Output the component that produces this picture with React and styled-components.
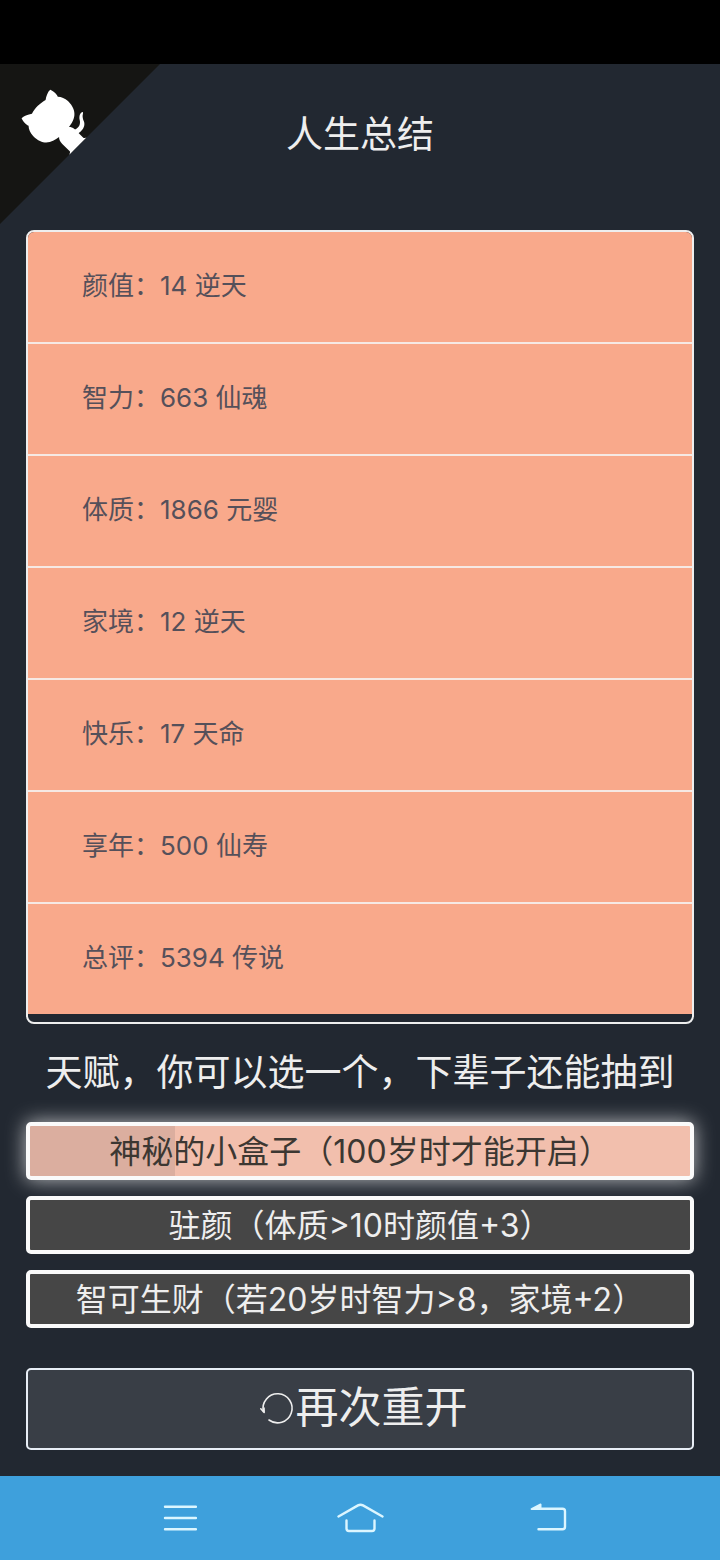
import React, { useState } from "react";
import styled, { createGlobalStyle, css } from "styled-components";

const GlobalStyle = createGlobalStyle`
  *, *::before, *::after { box-sizing: border-box; }
  body {
    margin: 0;
    background: #222831;
    color: #eeeeee;
    font-family: Inter, "Noto Sans CJK SC", sans-serif;
  }
  button { font: inherit; color: inherit; cursor: pointer; }
`;

const Screen = styled.div`
  display: flex;
  flex-direction: column;
  min-height: 100vh;
`;

const StatusBar = styled.div`
  height: 64px;
  background: #000000;
`;

const Header = styled.header`
  position: relative;
  display: flex;
  align-items: center;
  justify-content: center;
  height: 166px;
  padding-bottom: 24px;
`;

const CornerLink = styled.a`
  position: absolute;
  top: 0;
  left: 0;
  line-height: 0;
  color: #ffffff;
`;

const Heading = styled.h1`
  margin: 0;
  font-size: 37px;
  line-height: 48px;
  font-weight: 400;
`;

const Main = styled.main`
  flex: 1;
  display: flex;
  flex-direction: column;
  padding: 0 26px 26px;
`;

const Summary = styled.ul`
  margin: 0;
  padding: 0 0 8px;
  list-style: none;
  border: 2px solid #eeeeee;
  border-radius: 8px;
  overflow: hidden;
`;

const SummaryRow = styled.li`
  display: flex;
  align-items: center;
  height: 112px;
  padding: 0 54px 2px;
  border-bottom: 2px solid #f6e9e4;
  background: #f9a98b;
  color: #55505a;
  font-size: 26px;
  line-height: 36px;
  font-weight: 400;

  &:last-child {
    height: 110px;
    border-bottom: 0;
  }
`;

const Caption = styled.h2`
  display: flex;
  align-items: center;
  justify-content: center;
  height: 98px;
  margin: 0;
  font-size: 37px;
  line-height: 48px;
  font-weight: 400;
  white-space: nowrap;
`;

const TalentList = styled.div`
  display: flex;
  flex-direction: column;
  gap: 16px;
`;

const TalentButton = styled.button`
  height: 58px;
  padding: 2px 0 0;
  border: 4px solid #fafafa;
  border-radius: 5px;
  background: #464646;
  color: #eeeeee;
  font-size: 32px;
  line-height: 40px;
  font-weight: 400;
  white-space: nowrap;

  ${({ $selected }) =>
    $selected &&
    css`
      background: linear-gradient(90deg, #dbae9f 22%, #f2bfad 22%);
      color: #3c3732;
      box-shadow: 0 0 20px rgba(255, 255, 255, 0.7);
    `}
`;

const RestartButton = styled.button`
  display: flex;
  align-items: center;
  justify-content: center;
  height: 82px;
  margin-top: 40px;
  padding: 0 0 4px;
  border: 2px solid #e8eef6;
  border-radius: 5px;
  background: #393e46;
  font-size: 43px;
  line-height: 56px;
  font-weight: 400;
`;

const NavBar = styled.nav`
  display: flex;
  justify-content: center;
  height: 84px;
  background: #3ea0dc;
`;

const NavButton = styled.button`
  display: flex;
  align-items: center;
  justify-content: center;
  width: 26%;
  padding: 0;
  border: 0;
  background: none;
  color: #dcf6ff;
`;

const stats = [
  ["颜值", "14 逆天"],
  ["智力", "663 仙魂"],
  ["体质", "1866 元婴"],
  ["家境", "12 逆天"],
  ["快乐", "17 天命"],
  ["享年", "500 仙寿"],
  ["总评", "5394 传说"],
];

const talents = [
  "神秘的小盒子（100岁时才能开启）",
  "驻颜（体质>10时颜值+3）",
  "智可生财（若20岁时智力>8，家境+2）",
];

function GithubCorner() {
  return (
    <svg width="160" height="160" viewBox="0 0 250 250" aria-hidden="true">
      <g transform="translate(250 0) scale(-1 1)">
        <path d="M0,0 L250,250 L250,0 Z" fill="#151513" />
        <path
          d="M128.3,109.0 C113.8,99.7 119.0,89.6 119.0,89.6 C122.0,82.7 120.5,78.6 120.5,78.6 C119.2,72.0 123.4,76.3 123.4,76.3 C127.3,80.9 125.5,87.3 125.5,87.3 C122.9,97.6 130.6,101.9 134.4,103.2"
          fill="currentColor"
        />
        <path
          d="M115.0,115.0 C114.9,115.1 118.7,116.5 119.8,115.4 L133.7,101.6 C136.9,99.2 139.9,98.4 142.2,98.6 C133.8,88.0 127.5,74.4 143.8,58.0 C148.5,53.4 154.0,51.2 159.7,51.0 C160.3,49.4 163.2,43.6 171.4,40.1 C171.4,40.1 176.1,42.5 178.8,56.2 C183.1,58.6 187.2,61.8 190.9,65.4 C194.5,69.0 197.7,73.2 200.1,77.6 C213.8,80.2 216.3,84.9 216.3,84.9 C212.7,93.1 206.9,96.0 205.4,96.6 C205.1,102.4 203.0,107.8 198.3,112.5 C181.9,128.9 168.3,122.5 157.7,114.1 C157.9,116.9 156.7,120.9 152.7,124.9 L141.0,136.5 C139.8,137.7 141.6,141.9 141.8,141.8 Z"
          fill="currentColor"
        />
      </g>
    </svg>
  );
}

function RestartIcon() {
  return (
    <svg width="43" height="43" viewBox="0 0 43 43" fill="none" stroke="currentColor" aria-hidden="true">
      <path d="M16 34 A14.5 14.5 0 1 0 10.4 25.5" strokeWidth="1.6" strokeLinecap="round" />
      <path d="M7.8 22.8 L11.2 26.4 L11 22" strokeWidth="1.6" strokeLinejoin="round" strokeLinecap="round" />
    </svg>
  );
}

function MenuIcon() {
  return (
    <svg width="48" height="36" viewBox="0 0 48 36" fill="none" stroke="currentColor" strokeWidth="2.4" strokeLinecap="round" aria-hidden="true">
      <path d="M16 6.7H47M16 18H47M16 29.3H47" />
    </svg>
  );
}

function HomeIcon() {
  return (
    <svg width="48" height="36" viewBox="0 0 48 36" fill="none" stroke="currentColor" strokeWidth="2.4" strokeLinecap="round" strokeLinejoin="round" aria-hidden="true">
      <path d="M2.5 16.5 L22 5.4 Q24.5 4 27 5.4 L46.5 16.5" />
      <path d="M10.5 20.5V28.5Q10.5 31 13 31H36Q38.5 31 38.5 28.5V20.5" />
    </svg>
  );
}

function BackIcon() {
  return (
    <svg width="48" height="36" viewBox="0 0 48 36" fill="none" stroke="currentColor" strokeWidth="2.4" strokeLinecap="round" strokeLinejoin="round" aria-hidden="true">
      <path d="M14 8.7H39.5Q42 8.7 42 11.2V26.7Q42 29.3 39.5 29.3H15.5" />
      <path d="M8.5 9L17.6 4.4V9Z" strokeWidth="1.8" fill="currentColor" />
    </svg>
  );
}

export default function App() {
  const [selected, setSelected] = useState(0);

  return (
    <>
      <GlobalStyle />
      <Screen>
        <StatusBar />
        <Header>
          <CornerLink href="#github" aria-label="GitHub">
            <GithubCorner />
          </CornerLink>
          <Heading>人生总结</Heading>
        </Header>
        <Main>
          <Summary>
            {stats.map(([label, value]) => (
              <SummaryRow key={label}>{`${label}：${value}`}</SummaryRow>
            ))}
          </Summary>
          <Caption>天赋，你可以选一个，下辈子还能抽到</Caption>
          <TalentList>
            {talents.map((talent, index) => (
              <TalentButton
                key={talent}
                type="button"
                aria-pressed={index === selected}
                $selected={index === selected}
                onClick={() => setSelected(index)}
              >
                {talent}
              </TalentButton>
            ))}
          </TalentList>
          <RestartButton type="button">
            <RestartIcon />
            再次重开
          </RestartButton>
        </Main>
        <NavBar>
          <NavButton type="button" aria-label="菜单">
            <MenuIcon />
          </NavButton>
          <NavButton type="button" aria-label="主页">
            <HomeIcon />
          </NavButton>
          <NavButton type="button" aria-label="返回">
            <BackIcon />
          </NavButton>
        </NavBar>
      </Screen>
    </>
  );
}
